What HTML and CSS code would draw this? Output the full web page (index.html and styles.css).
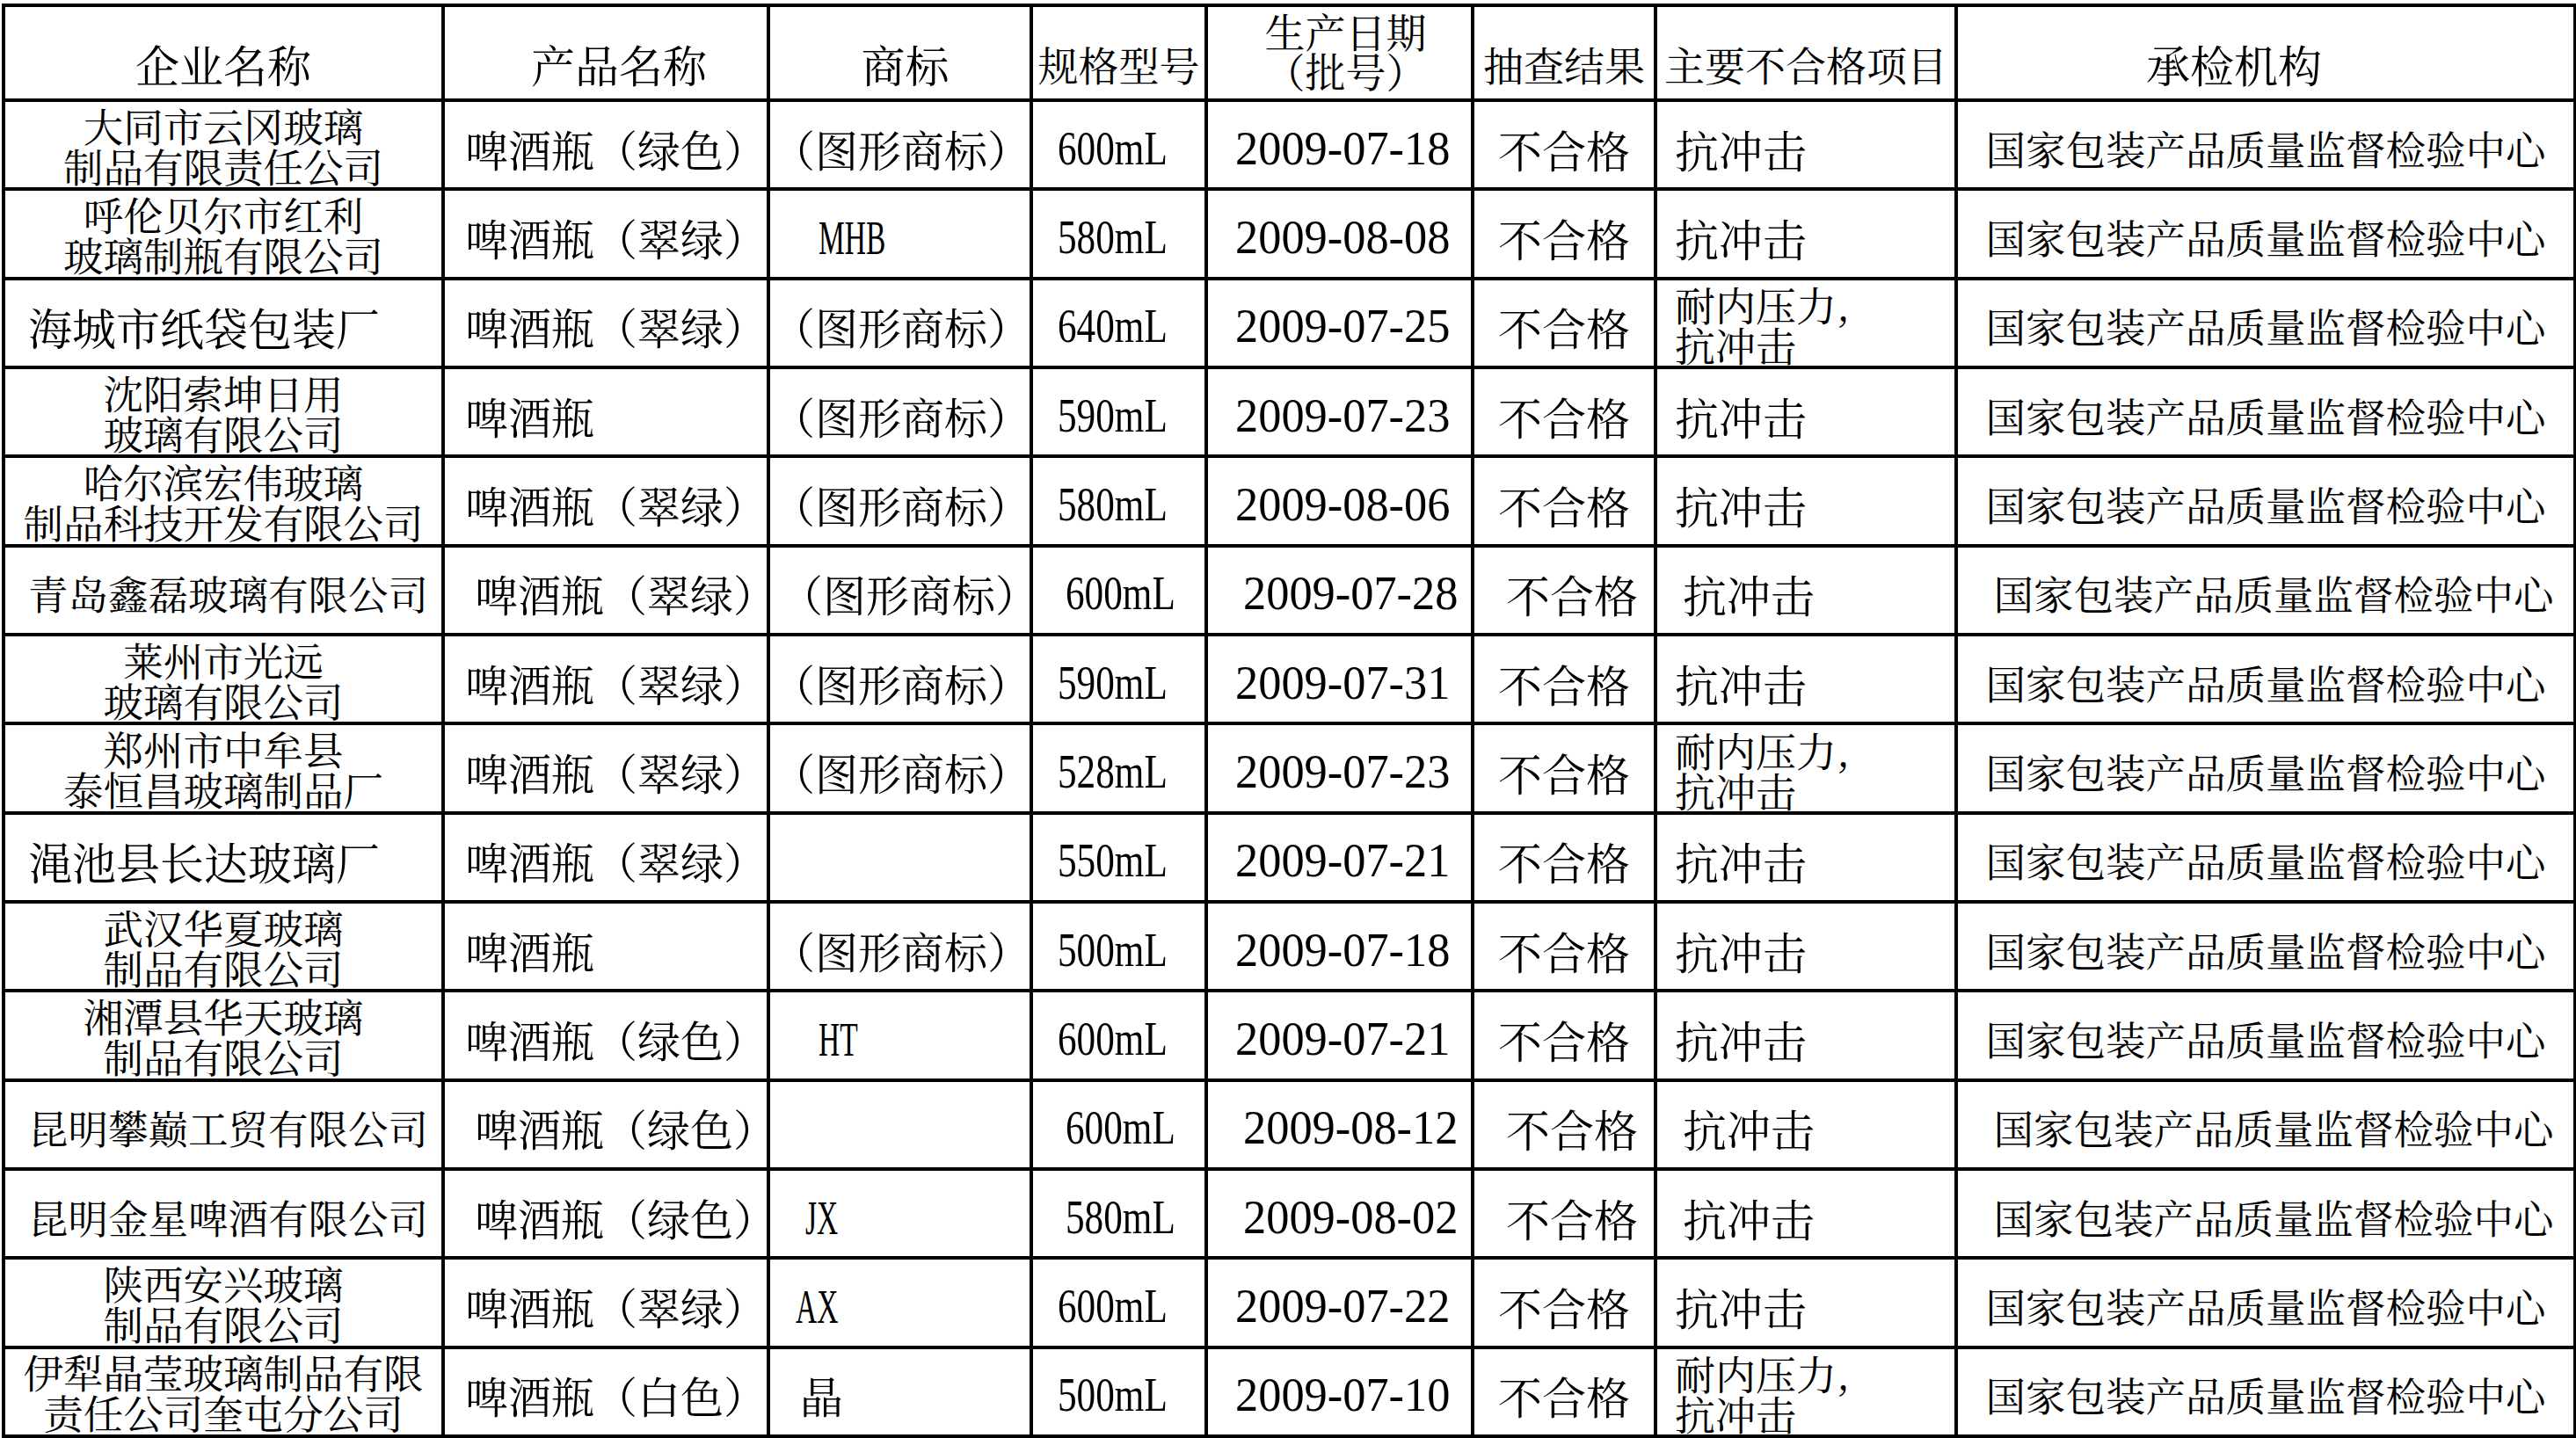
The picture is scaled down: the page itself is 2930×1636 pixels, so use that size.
FILE: index.html
```html
<!DOCTYPE html>
<html lang="zh-CN">
<head>
<meta charset="utf-8">
<title>啤酒瓶抽查结果</title>
<link rel="stylesheet" href="styles.css">
</head>
<body>
<table class="sheet">
  <colgroup>
    <col class="w1"><col class="w2"><col class="w3"><col class="w4">
    <col class="w5"><col class="w6"><col class="w7"><col class="w8">
  </colgroup>
  <thead>
    <tr class="head">
      <th class="hb">企业名称</th>
      <th class="hb h-pr">产品名称</th>
      <th class="hb h-tm">商标</th>
      <th class="hs">规格型号</th>
      <th class="hs h-two">生产日期<br>（批号）</th>
      <th class="hs">抽查结果</th>
      <th class="hs">主要不合格项目</th>
      <th class="hb h-lab">承检机构</th>
    </tr>
  </thead>
  <tbody>
    <tr>
      <td class="co two">大同市云冈玻璃<br>制品有限责任公司</td>
      <td class="pr">啤酒瓶（绿色）</td>
      <td class="tm">（图形商标）</td>
      <td class="sp"><span class="n ns">600mL</span></td>
      <td class="dt"><span class="n nd">2009-07-18</span></td>
      <td class="rs">不合格</td>
      <td class="it">抗冲击</td>
      <td class="lab">国家包装产品质量监督检验中心</td>
    </tr>
    <tr>
      <td class="co two">呼伦贝尔市红利<br>玻璃制瓶有限公司</td>
      <td class="pr">啤酒瓶（翠绿）</td>
      <td class="tm ind-a"><span class="n nc">MHB</span></td>
      <td class="sp"><span class="n ns">580mL</span></td>
      <td class="dt"><span class="n nd">2009-08-08</span></td>
      <td class="rs">不合格</td>
      <td class="it">抗冲击</td>
      <td class="lab">国家包装产品质量监督检验中心</td>
    </tr>
    <tr>
      <td class="co one big">海城市纸袋包装厂</td>
      <td class="pr">啤酒瓶（翠绿）</td>
      <td class="tm">（图形商标）</td>
      <td class="sp"><span class="n ns">640mL</span></td>
      <td class="dt"><span class="n nd">2009-07-25</span></td>
      <td class="rs">不合格</td>
      <td class="it two">耐内压力,<br>抗冲击</td>
      <td class="lab">国家包装产品质量监督检验中心</td>
    </tr>
    <tr>
      <td class="co two">沈阳索坤日用<br>玻璃有限公司</td>
      <td class="pr">啤酒瓶</td>
      <td class="tm">（图形商标）</td>
      <td class="sp"><span class="n ns">590mL</span></td>
      <td class="dt"><span class="n nd">2009-07-23</span></td>
      <td class="rs">不合格</td>
      <td class="it">抗冲击</td>
      <td class="lab">国家包装产品质量监督检验中心</td>
    </tr>
    <tr>
      <td class="co two">哈尔滨宏伟玻璃<br>制品科技开发有限公司</td>
      <td class="pr">啤酒瓶（翠绿）</td>
      <td class="tm">（图形商标）</td>
      <td class="sp"><span class="n ns">580mL</span></td>
      <td class="dt"><span class="n nd">2009-08-06</span></td>
      <td class="rs">不合格</td>
      <td class="it">抗冲击</td>
      <td class="lab">国家包装产品质量监督检验中心</td>
    </tr>
    <tr class="sh">
      <td class="co one">青岛鑫磊玻璃有限公司</td>
      <td class="pr">啤酒瓶（翠绿）</td>
      <td class="tm">（图形商标）</td>
      <td class="sp"><span class="n ns">600mL</span></td>
      <td class="dt"><span class="n nd">2009-07-28</span></td>
      <td class="rs">不合格</td>
      <td class="it">抗冲击</td>
      <td class="lab">国家包装产品质量监督检验中心</td>
    </tr>
    <tr>
      <td class="co two">莱州市光远<br>玻璃有限公司</td>
      <td class="pr">啤酒瓶（翠绿）</td>
      <td class="tm">（图形商标）</td>
      <td class="sp"><span class="n ns">590mL</span></td>
      <td class="dt"><span class="n nd">2009-07-31</span></td>
      <td class="rs">不合格</td>
      <td class="it">抗冲击</td>
      <td class="lab">国家包装产品质量监督检验中心</td>
    </tr>
    <tr>
      <td class="co two">郑州市中牟县<br>泰恒昌玻璃制品厂</td>
      <td class="pr">啤酒瓶（翠绿）</td>
      <td class="tm">（图形商标）</td>
      <td class="sp"><span class="n ns">528mL</span></td>
      <td class="dt"><span class="n nd">2009-07-23</span></td>
      <td class="rs">不合格</td>
      <td class="it two">耐内压力,<br>抗冲击</td>
      <td class="lab">国家包装产品质量监督检验中心</td>
    </tr>
    <tr>
      <td class="co one big">渑池县长达玻璃厂</td>
      <td class="pr">啤酒瓶（翠绿）</td>
      <td class="tm"></td>
      <td class="sp"><span class="n ns">550mL</span></td>
      <td class="dt"><span class="n nd">2009-07-21</span></td>
      <td class="rs">不合格</td>
      <td class="it">抗冲击</td>
      <td class="lab">国家包装产品质量监督检验中心</td>
    </tr>
    <tr>
      <td class="co two">武汉华夏玻璃<br>制品有限公司</td>
      <td class="pr">啤酒瓶</td>
      <td class="tm">（图形商标）</td>
      <td class="sp"><span class="n ns">500mL</span></td>
      <td class="dt"><span class="n nd">2009-07-18</span></td>
      <td class="rs">不合格</td>
      <td class="it">抗冲击</td>
      <td class="lab">国家包装产品质量监督检验中心</td>
    </tr>
    <tr>
      <td class="co two">湘潭县华天玻璃<br>制品有限公司</td>
      <td class="pr">啤酒瓶（绿色）</td>
      <td class="tm ind-a"><span class="n nc">HT</span></td>
      <td class="sp"><span class="n ns">600mL</span></td>
      <td class="dt"><span class="n nd">2009-07-21</span></td>
      <td class="rs">不合格</td>
      <td class="it">抗冲击</td>
      <td class="lab">国家包装产品质量监督检验中心</td>
    </tr>
    <tr class="sh">
      <td class="co one">昆明攀巅工贸有限公司</td>
      <td class="pr">啤酒瓶（绿色）</td>
      <td class="tm"></td>
      <td class="sp"><span class="n ns">600mL</span></td>
      <td class="dt"><span class="n nd">2009-08-12</span></td>
      <td class="rs">不合格</td>
      <td class="it">抗冲击</td>
      <td class="lab">国家包装产品质量监督检验中心</td>
    </tr>
    <tr class="sh">
      <td class="co one">昆明金星啤酒有限公司</td>
      <td class="pr">啤酒瓶（绿色）</td>
      <td class="tm ind-b"><span class="n nc">JX</span></td>
      <td class="sp"><span class="n ns">580mL</span></td>
      <td class="dt"><span class="n nd">2009-08-02</span></td>
      <td class="rs">不合格</td>
      <td class="it">抗冲击</td>
      <td class="lab">国家包装产品质量监督检验中心</td>
    </tr>
    <tr>
      <td class="co two">陕西安兴玻璃<br>制品有限公司</td>
      <td class="pr">啤酒瓶（翠绿）</td>
      <td class="tm ind-c"><span class="n nc">AX</span></td>
      <td class="sp"><span class="n ns">600mL</span></td>
      <td class="dt"><span class="n nd">2009-07-22</span></td>
      <td class="rs">不合格</td>
      <td class="it">抗冲击</td>
      <td class="lab">国家包装产品质量监督检验中心</td>
    </tr>
    <tr>
      <td class="co two">伊犁晶莹玻璃制品有限<br>责任公司奎屯分公司</td>
      <td class="pr">啤酒瓶（白色）</td>
      <td class="tm ind-d">晶</td>
      <td class="sp"><span class="n ns">500mL</span></td>
      <td class="dt"><span class="n nd">2009-07-10</span></td>
      <td class="rs">不合格</td>
      <td class="it two">耐内压力,<br>抗冲击</td>
      <td class="lab">国家包装产品质量监督检验中心</td>
    </tr>
  </tbody>
</table>
</body>
</html>
```

FILE: styles.css
```css
html, body {
  margin: 0;
  padding: 0;
  background: #ffffff;
}

.sheet {
  border-collapse: collapse;
  table-layout: fixed;
  width: 2929px;
  margin: 4px 0 0 2px;
  font-family: "Noto Serif CJK SC", "Source Han Serif SC", "Noto Sans CJK SC", serif;
  color: #000000;
}

.w1 { width: 500px; }
.w2 { width: 370px; }
.w3 { width: 299px; }
.w4 { width: 199px; }
.w5 { width: 303px; }
.w6 { width: 208px; }
.w7 { width: 342px; }
.w8 { width: 704px; }

/* base cell rules use element selectors so the class rules below win */
th, td {
  border: 4px solid #000000;
  white-space: nowrap;
  overflow: visible;
  font-weight: normal;
  line-height: 46px;
}

/* header */
.head { height: 108px; }
th {
  vertical-align: bottom;
  text-align: center;
  padding: 0 0 17px 0;
}
.hb { font-size: 50px; }
.hs { font-size: 46px; }
.h-pr { padding-left: 30px; }
.h-tm { padding-left: 12px; }
.h-lab { padding-right: 72px; }
.h-two {
  padding-bottom: 10px;
  padding-left: 14px;
  line-height: 45px;
}

/* body rows */
tbody tr { height: 101.33px; }
td {
  vertical-align: middle;
  padding: 8px 0 0 0;
}
.two { padding-top: 2px; }

.co {
  font-size: 45.5px;
  text-align: center;
}
.one {
  text-align: left;
  padding-left: 26px;
}
.big { font-size: 50px; }

.pr {
  font-size: 49px;
  text-align: left;
  padding-left: 23px;
}

.tm {
  font-size: 49px;
  text-align: left;
  padding-left: 2px;
}
.ind-a { padding-left: 55px; }
.ind-b { padding-left: 40px; }
.ind-c { padding-left: 29px; }
.ind-d { padding-left: 34px; }

.sp {
  text-align: left;
  padding-left: 28px;
  padding-top: 20px;
}
.dt {
  text-align: left;
  padding-left: 31px;
  padding-top: 20px;
}

.rs {
  font-size: 50px;
  text-align: center;
}

.it {
  font-size: 50px;
  text-align: left;
  padding-left: 20px;
}
.it.two {
  font-size: 46px;
  line-height: 46px;
}

.lab {
  font-size: 45.5px;
  text-align: center;
}

/* latin / numeric runs: condensed Times-like figures */
.n {
  display: inline-block;
  font-family: "Liberation Serif", "Times New Roman", serif;
  font-size: 54px;
  line-height: 46px;
  transform-origin: left center;
}
.ns { transform: scaleX(0.8); }
.nd { transform: scaleX(0.97); }
.nc { transform: scaleX(0.62); }

/* rows that sit a little to the right in the source sheet */
.sh .pr { padding-left: 34px; }
.sh .tm { padding-left: 11px; }
.sh .ind-b { padding-left: 40px; }
.sh .sp { padding-left: 37px; }
.sh .dt { padding-left: 40px; }
.sh .rs { padding-left: 18px; }
.sh .it { padding-left: 29px; }
.sh .lab { padding-left: 18px; }
```
